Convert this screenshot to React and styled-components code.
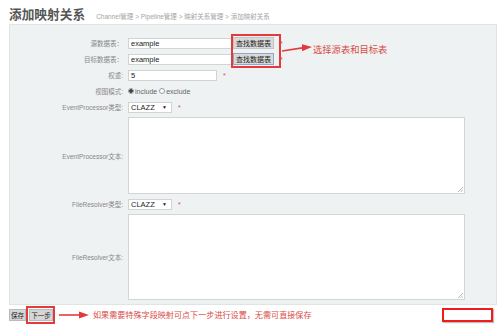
import React from 'react';
import styled, { createGlobalStyle } from 'styled-components';

const GlobalStyle = createGlobalStyle`
  html, body { margin: 0; padding: 0; background: #fff; }
  body { font-family: "Liberation Sans", "Noto Sans CJK SC", sans-serif; color: #333; }
`;

const Page = styled.div`
  width: 500px;
  height: 332px;
  overflow: hidden;
  position: relative;
`;

const Header = styled.div`
  display: flex;
  align-items: baseline;
  padding: 4px 0 0 9px;
  height: 20px;
`;

const Title = styled.h1`
  margin: 0;
  font-size: 12.7px;
  font-weight: bold;
  color: #555;
  font-family: "Noto Sans CJK SC", sans-serif;
`;

const Crumbs = styled.span`
  margin-left: 11px;
  font-size: 6.5px;
  color: #a4a4a4;
  font-family: "Liberation Sans", "Noto Sans CJK SC", sans-serif;
`;

const Panel = styled.div`
  position: relative;
  margin: 0 3px 0 9px;
  height: 281px;
  box-sizing: border-box;
  background: #eef2f2;
  border: 1px solid #dfe4e4;
  padding: 12px 0 0 0;
  display: grid;
  grid-template-columns: 113px 1fr;
  column-gap: 5px;
  row-gap: 4px;
  grid-template-rows: 12px 12px 12px 12px 12px 77px 12px 86px;
`;

const Label = styled.div`
  display: flex;
  align-items: center;
  justify-content: flex-end;
  font-size: 6.5px;
  color: #888;
  font-family: "Liberation Sans", "Noto Sans CJK SC", sans-serif;
`;

const Field = styled.div`
  display: flex;
  align-items: center;
`;

const Input = styled.div`
  box-sizing: border-box;
  width: ${p => p.$w}px;
  height: 11px;
  background: #fff;
  border: 1px solid #cfd4d4;
  font-size: 7.5px;
  line-height: 9px;
  padding-left: 2px;
  color: #222;
`;

const FindButton = styled.div`
  box-sizing: border-box;
  margin-left: 1px;
  height: 12px;
  padding: 0 2px;
  font-size: 7px;
  line-height: 10px;
  color: #222;
  background: #d9d9d9;
  border: 1px solid ${p => (p.$focus ? '#8fa8c8' : '#c4c4c4')};
  font-family: "Noto Sans CJK SC", sans-serif;
`;

const Star = styled.span`
  color: #e05050;
  font-size: 7px;
  margin-left: ${p => p.$gap || 6}px;
`;

const Radio = styled.span`
  display: inline-block;
  box-sizing: border-box;
  width: 6px;
  height: 6px;
  border-radius: 50%;
  border: 1px solid #999;
  background: ${p => (p.$on ? 'radial-gradient(circle, #444 0 1.6px, #fff 1.8px)' : '#fff')};
  margin-right: 1px;
`;

const RadioText = styled.span`
  font-size: 7px;
  color: #666;
  margin-right: 2px;
`;

const Select = styled.div`
  box-sizing: border-box;
  width: 44px;
  height: 11px;
  background: #fff;
  border: 1px solid #cfd4d4;
  display: flex;
  align-items: center;
  justify-content: space-between;
  padding: 0 4px 0 2px;
  font-size: 7.5px;
  color: #222;
`;

const Caret = styled.span`
  font-size: 5px;
  color: #222;
`;

const TextArea = styled.div`
  position: relative;
  box-sizing: border-box;
  width: 337px;
  height: 100%;
  background: #fff;
  border: 1px solid #d2d6d6;
`;

const Grip = styled.svg`
  position: absolute;
  right: 1px;
  bottom: 1px;
`;

const Highlight = styled.div`
  position: absolute;
  box-sizing: border-box;
  border: 2px solid #e33b3b;
`;

const Note = styled.div`
  position: absolute;
  display: flex;
  align-items: center;
  font-size: 9.3px;
  color: #d94a45;
  font-family: "Noto Sans CJK SC", sans-serif;
`;

const Footer = styled.div`
  display: flex;
  align-items: center;
  padding: 1px 0 0 9px;
  height: 17px;
`;

const ActionButton = styled.div`
  box-sizing: border-box;
  height: 12px;
  padding: 0 1px;
  font-size: 6.6px;
  line-height: 11px;
  background: #d6d6d6;
  color: #222;
  border: 1px solid #bbb;
  font-family: "Noto Sans CJK SC", sans-serif;
`;

const Boxed = styled.div`
  box-sizing: border-box;
  padding: 1px 0 1px 1px;
  border: 2px solid #e33b3b;
`;

const FooterNote = styled.span`
  font-size: 8.1px;
  color: #d94a45;
  font-family: "Noto Sans CJK SC", sans-serif;
  margin-left: 4px;
`;

const EmptyMark = styled.div`
  margin-left: auto;
  margin-right: 7px;
  width: 51px;
  height: 14px;
  box-sizing: border-box;
  border: 2px solid #f01c1c;
  background: #fff;
  box-shadow: 1px 1px 1px rgba(0, 0, 0, 0.25);
`;

const ArrowWrap = styled.span`
  display: flex;
  margin-left: ${p => p.$gap || 0}px;
`;

const Arrow = ({ w, h, rise = 0 }) => (
  <svg width={w} height={h} viewBox={`0 0 ${w} ${h}`}>
    <line x1="0" y1={h / 2 + rise} x2={w - 8} y2={h / 2 - rise * 0.7} stroke="#e33b3b" strokeWidth="1.6" />
    <polygon points={`${w - 10},${h / 2 - 3.5 - rise * 0.6} ${w},${h / 2 - rise} ${w - 10},${h / 2 + 3.5 - rise * 0.6}`} fill="#e33b3b" />
  </svg>
);

const ResizeGrip = () => (
  <Grip width="6" height="6" viewBox="0 0 6 6">
    <line x1="1" y1="6" x2="6" y2="1" stroke="#aaa" strokeWidth="0.8" />
    <line x1="3.5" y1="6" x2="6" y2="3.5" stroke="#aaa" strokeWidth="0.8" />
  </Grip>
);

export default function App() {
  return (
    <Page>
      <GlobalStyle />
      <Header>
        <Title>添加映射关系</Title>
        <Crumbs>Channel管理 &gt; Pipeline管理 &gt; 映射关系管理 &gt; 添加映射关系</Crumbs>
      </Header>
      <Panel>
        <Label>源数据表：</Label>
        <Field>
          <Input $w={104}>example</Input>
          <FindButton>查找数据表</FindButton>
          <Star>*</Star>
        </Field>

        <Label>目标数据表：</Label>
        <Field>
          <Input $w={104}>example</Input>
          <FindButton $focus>查找数据表</FindButton>
          <Star>*</Star>
        </Field>

        <Label>权重:</Label>
        <Field>
          <Input $w={89}>5</Input>
          <Star>*</Star>
        </Field>

        <Label>视图模式:</Label>
        <Field>
          <Radio $on />
          <RadioText>include</RadioText>
          <Radio />
          <RadioText>exclude</RadioText>
        </Field>

        <Label>EventProcessor类型:</Label>
        <Field>
          <Select>CLAZZ<Caret>▼</Caret></Select>
          <Star>*</Star>
        </Field>

        <Label>EventProcessor文本:</Label>
        <Field>
          <TextArea><ResizeGrip /></TextArea>
        </Field>

        <Label>FileResolver类型:</Label>
        <Field>
          <Select>CLAZZ<Caret>▼</Caret></Select>
          <Star>*</Star>
        </Field>

        <Label>FileResolver文本:</Label>
        <Field>
          <TextArea><ResizeGrip /></TextArea>
        </Field>

        <Highlight style={{ left: 221, top: 9, width: 50, height: 34 }} />
        <Note style={{ left: 272, top: 17 }}>
          <Arrow w={30} h={14} rise={2} />
          <span style={{ marginLeft: 1 }}>选择源表和目标表</span>
        </Note>
      </Panel>
      <Footer>
        <ActionButton>保存</ActionButton>
        <Boxed>
          <ActionButton>下一步</ActionButton>
        </Boxed>
        <ArrowWrap $gap={4}>
          <Arrow w={30} h={10} />
        </ArrowWrap>
        <FooterNote>如果需要特殊字段映射可点下一步进行设置，无需可直接保存</FooterNote>
        <EmptyMark />
      </Footer>
    </Page>
  );
}
